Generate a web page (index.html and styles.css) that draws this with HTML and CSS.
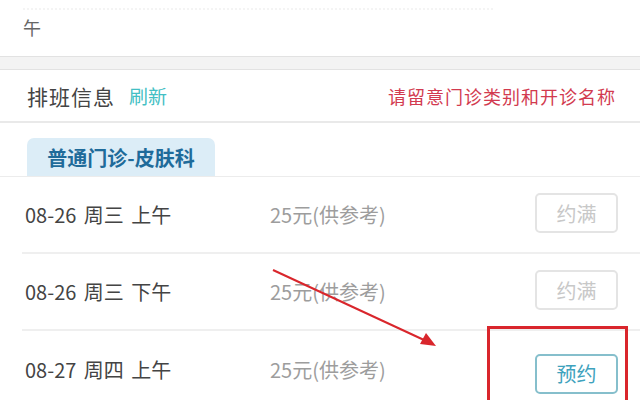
FILE: index.html
```
<!DOCTYPE html>
<html lang="zh">
<head>
<meta charset="utf-8">
<link rel="stylesheet" href="styles.css">
</head>
<body>
<div class="page">
  <div class="top">
    <div class="cut">&nbsp;</div>
    <div class="top-text">午</div>
  </div>
  <div class="gap"></div>
  <div class="header">
    <span class="title">排班信息</span>
    <span class="refresh">刷新</span>
    <span class="notice">请留意门诊类别和开诊名称</span>
  </div>
  <div class="tabbar">
    <div class="tab">普通门诊-皮肤科</div>
  </div>
  <div class="list">
    <div class="row">
      <span class="date">08-26 周三 上午</span>
      <span class="price">25元(供参考)</span>
      <span class="btn full">约满</span>
    </div>
    <div class="row">
      <span class="date">08-26 周三 下午</span>
      <span class="price">25元(供参考)</span>
      <span class="btn full">约满</span>
    </div>
    <div class="row">
      <span class="date">08-27 周四 上午</span>
      <span class="price">25元(供参考)</span>
      <span class="btn book">预约</span>
    </div>
  </div>
  <svg class="annot" width="640" height="400" viewBox="0 0 640 400">
    <line x1="273" y1="270" x2="424" y2="340" stroke="#d9262c" stroke-width="2"/>
    <polygon points="436,346 420,344 426,333" fill="#d9262c"/>
    <rect x="488.5" y="327.5" width="138" height="76" fill="none" stroke="#d9262c" stroke-width="3"/>
  </svg>
</div>
</body>
</html>
```
FILE: styles.css
```
html, body {
  margin: 0;
  padding: 0;
  background: #ffffff;
}
body {
  font-family: "Noto Sans CJK SC", "Noto Sans", sans-serif;
  width: 640px;
  height: 400px;
  overflow: hidden;
}
.page {
  position: relative;
  width: 640px;
  height: 400px;
  overflow: hidden;
}
.top {
  height: 56px;
  padding-left: 23px;
  box-sizing: border-box;
}
.cut {
  height: 8px;
  border-bottom: 2px dotted #f4f4f4;
  width: 470px;
  margin-bottom: 4px;
}
.top-text {
  font-size: 18px;
  color: #666666;
  line-height: 26px;
}
.gap {
  height: 12px;
  background: #f3f3f3;
  border-top: 1px solid #e2e2e2;
  border-bottom: 1px solid #e2e2e2;
}
.header {
  height: 51px;
  display: flex;
  align-items: center;
  padding: 0 24px 0 27px;
  border-bottom: 2px solid #e9e9e9;
}
.title {
  font-size: 21px;
  color: #444444;
  letter-spacing: 1px;
}
.refresh {
  font-size: 19px;
  color: #43bfc4;
  margin-left: 14px;
}
.notice {
  margin-left: auto;
  font-size: 18px;
  color: #d23a4f;
  letter-spacing: 1px;
}
.tabbar {
  height: 54px;
  padding: 15px 0 0 27px;
  box-sizing: border-box;
  border-bottom: 1px solid #ececec;
  display: flex;
  align-items: flex-end;
}
.tab {
  height: 38px;
  width: 188px;
  background: #dcedf7;
  border-radius: 7px 7px 0 0;
  display: flex;
  align-items: center;
  justify-content: center;
  font-size: 20px;
  font-weight: bold;
  color: #1f6b9a;
}
.list {
  padding-left: 22px;
}
.row {
  height: 77px;
  display: flex;
  align-items: center;
  border-bottom: 2px solid #efefef;
  padding-right: 22px;
  box-sizing: border-box;
}
.row:last-child {
  border-bottom: none;
}
.date {
  width: 245px;
  padding-left: 3px;
  font-size: 20px;
  color: #444444;
  word-spacing: 3px;
}
.price {
  font-size: 20px;
  color: #9d9d9d;
}
.btn {
  margin-left: auto;
  width: 83px;
  height: 40px;
  box-sizing: border-box;
  border-radius: 5px;
  display: flex;
  align-items: center;
  justify-content: center;
  font-size: 20px;
}
.full {
  border: 2px solid #e4e4e4;
  color: #c8c8c8;
  margin-top: -3px;
}
.book {
  border: 2px solid #86bfcc;
  color: #3ea2bd;
  margin-top: 8px;
}
.annot {
  position: absolute;
  left: 0;
  top: 0;
}
```
